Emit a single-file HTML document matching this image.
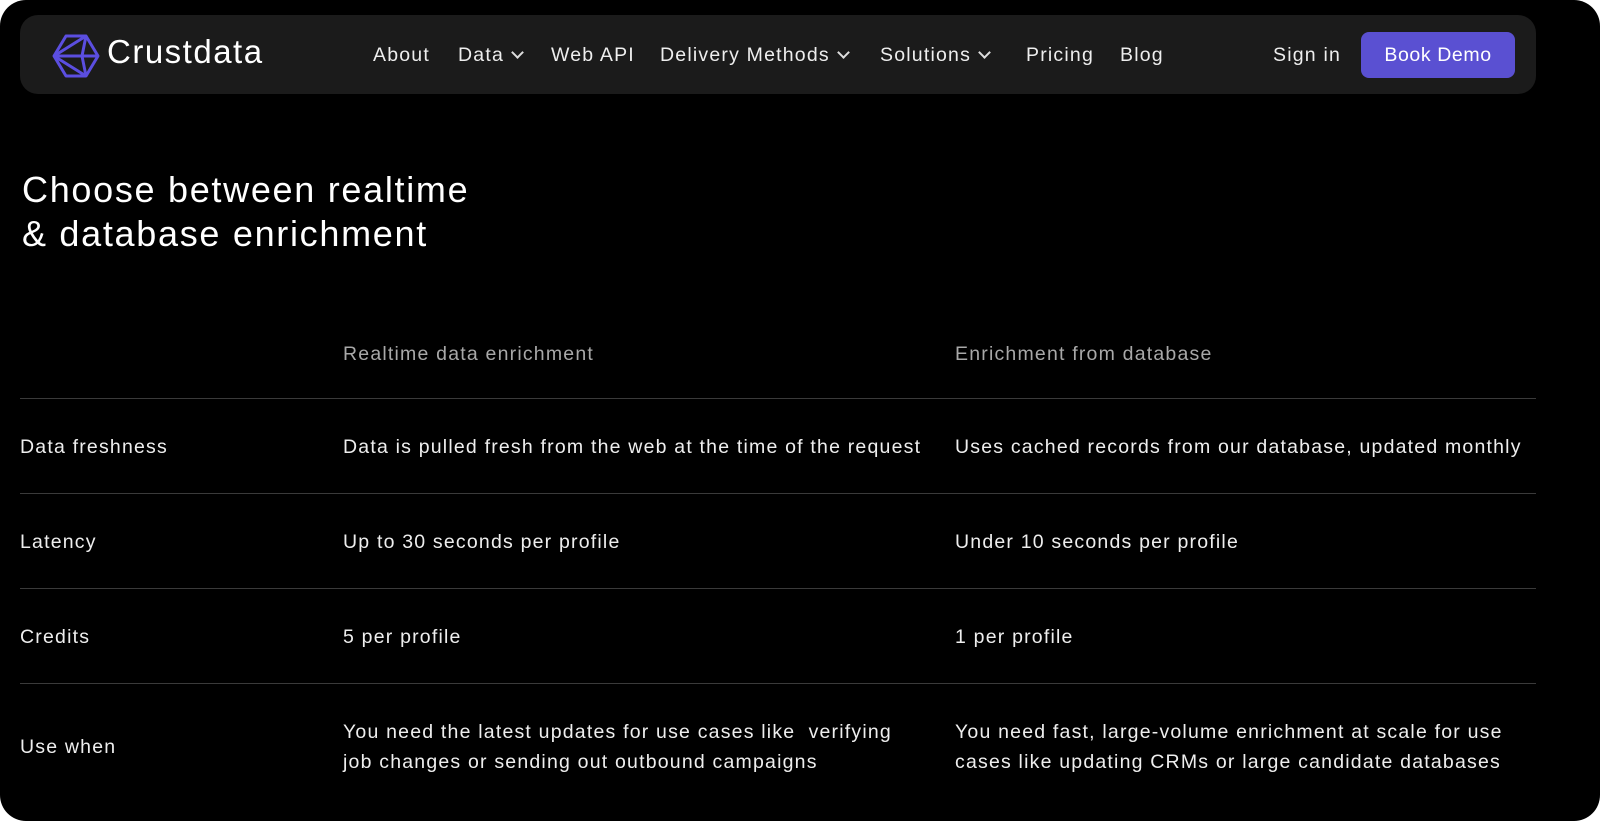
<!DOCTYPE html>
<html><head><meta charset="utf-8"><style>
html,body{margin:0;padding:0;background:#fff;}
body{width:1600px;height:821px;overflow:hidden;font-family:"Liberation Sans",sans-serif;color:#f2f2f2;}
.card{position:absolute;left:0;top:0;width:1600px;height:821px;background:#000;border-radius:26px;}
.nav{position:absolute;left:20px;top:15px;width:1516px;height:79px;background:#1b1b1b;border-radius:18px;}
.t{position:absolute;white-space:nowrap;}
.ni{font-size:19.5px;top:44px;color:#eee;letter-spacing:1.2px;}
.chev{display:inline-block;width:7px;height:7px;border-right:2px solid #ddd;border-bottom:2px solid #ddd;transform:rotate(45deg);margin-left:9px;position:relative;top:-4px;}
.btn{position:absolute;left:1361px;top:32px;width:154px;height:46px;background:#5a50d2;border-radius:8px;color:#fff;font-size:19.5px;text-align:center;line-height:46px;letter-spacing:0.6px;}
.h{font-size:36px;left:22px;color:#fff;letter-spacing:1.7px;}
.line{position:absolute;left:20px;width:1516px;height:1px;background:#3a3a3a;}
.c{font-size:19.5px;color:#eee;letter-spacing:1.2px;}
.g{color:#a8a8a8;}
</style></head><body>
<div class="card"></div>
<div class="nav"></div>
<svg style="position:absolute;left:52px;top:33px" width="48" height="46" viewBox="0 0 48 46" fill="none" stroke="#5b4ee0" stroke-width="3" stroke-linejoin="round">
<polygon points="14,3 34,3 46,23 34,43 14,43 2,23"/>
<path d="M2,23 L34,3 M2,23 L30,23 L34,3 M30,23 L34,43 M2,23 L34,43 M30,23 L46,23"/>
</svg>
<div class="t" style="left:107px;top:33px;font-size:33px;color:#fff;letter-spacing:1.5px;">Crustdata</div>
<div class="t ni" style="left:373px">About</div>
<div class="t ni" style="left:458px">Data<span class="chev"></span></div>
<div class="t ni" style="left:551px">Web API</div>
<div class="t ni" style="left:660px">Delivery Methods<span class="chev"></span></div>
<div class="t ni" style="left:880px">Solutions<span class="chev"></span></div>
<div class="t ni" style="left:1026px">Pricing</div>
<div class="t ni" style="left:1120px">Blog</div>
<div class="t ni" style="left:1273px">Sign in</div>
<div class="btn">Book Demo</div>

<div class="t h" style="top:169px">Choose between realtime</div>
<div class="t h" style="top:213px">&amp; database enrichment</div>

<div class="t c g" style="left:343px;top:343px">Realtime data enrichment</div>
<div class="t c g" style="left:955px;top:343px">Enrichment from database</div>
<div class="line" style="top:398px"></div>
<div class="t c" style="left:20px;top:436px">Data freshness</div>
<div class="t c" style="left:343px;top:436px">Data is pulled fresh from the web at the time of the request</div>
<div class="t c" style="left:955px;top:436px">Uses cached records from our database, updated monthly</div>
<div class="line" style="top:493px"></div>
<div class="t c" style="left:20px;top:531px">Latency</div>
<div class="t c" style="left:343px;top:531px">Up to 30 seconds per profile</div>
<div class="t c" style="left:955px;top:531px">Under 10 seconds per profile</div>
<div class="line" style="top:588px"></div>
<div class="t c" style="left:20px;top:626px">Credits</div>
<div class="t c" style="left:343px;top:626px">5 per profile</div>
<div class="t c" style="left:955px;top:626px">1 per profile</div>
<div class="line" style="top:683px"></div>
<div class="t c" style="left:20px;top:736px">Use when</div>
<div class="t c" style="left:343px;top:721px">You need the latest updates for use cases like&nbsp; verifying</div>
<div class="t c" style="left:343px;top:751px">job changes or sending out outbound campaigns</div>
<div class="t c" style="left:955px;top:721px">You need fast, large-volume enrichment at scale for use</div>
<div class="t c" style="left:955px;top:751px">cases like updating CRMs or large candidate databases</div>
</body></html>
